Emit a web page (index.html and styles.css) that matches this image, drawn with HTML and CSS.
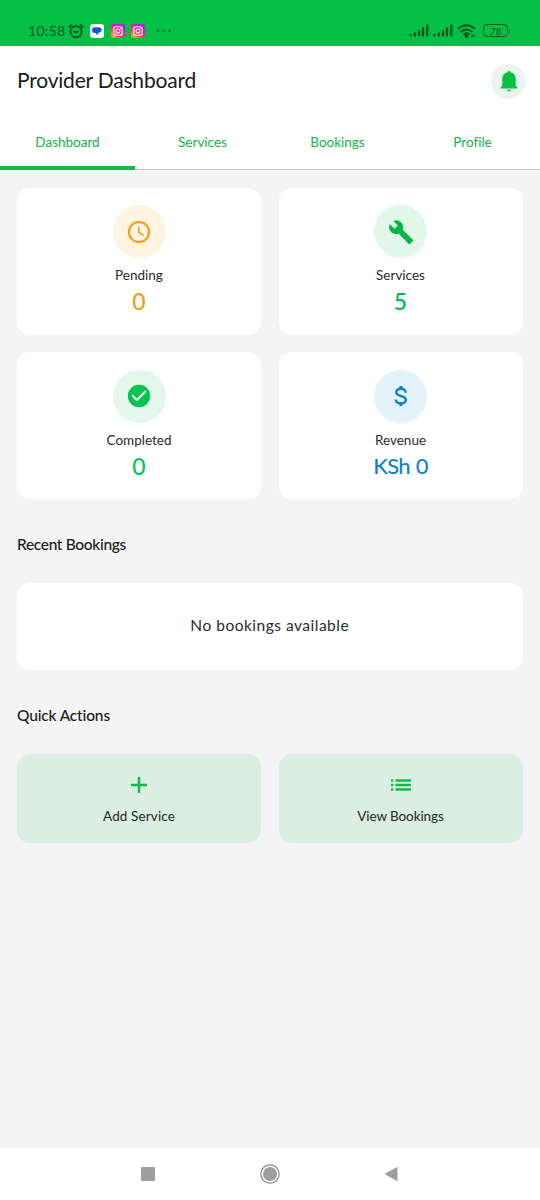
FILE: index.html
```html
<!DOCTYPE html>
<html lang="en">
<head>
<meta charset="utf-8">
<title>Provider Dashboard</title>
<link rel="stylesheet" href="styles.css">
</head>
<body>
<div class="status">
  <div class="status-left">
    <span class="time">10:58</span>
    <svg class="alarm" width="16" height="16" viewBox="0 0 16 16" fill="none" stroke="#05551b" stroke-width="1.8"><circle cx="8" cy="8.7" r="5.6"/><path d="M.8 4.3 4 1.3M15.2 4.3 12 1.3M5.7 8l2.3 1.5L10.5 8"/></svg>
    <svg class="app" width="14" height="14" viewBox="0 0 14 14"><rect width="14" height="14" rx="3" fill="#fff"/><path d="M5 3.200h4.200a2.700 2.700 0 0 1 .6 5.300L8.500 9 7 11.400 6 9H4.800A2.900 2.900 0 0 1 5 3.200Z" fill="#1457d2"/></svg>
    <svg class="app" width="14" height="14" viewBox="0 0 14 14"><defs><linearGradient id="ig" x1="0" y1="1" x2=".7" y2="0"><stop offset="0" stop-color="#ffc63b"/><stop offset=".35" stop-color="#ff4c48"/><stop offset=".7" stop-color="#e317ae"/><stop offset="1" stop-color="#a921e6"/></linearGradient></defs><rect width="14" height="14" rx="3" fill="url(#ig)"/><rect x="2.700" y="2.700" width="8.600" height="8.600" rx="2.300" fill="none" stroke="#fff" stroke-width="1.100"/><circle cx="7" cy="7" r="2" fill="none" stroke="#fff" stroke-width="1.100"/><circle cx="9.500" cy="4.500" r=".6" fill="#fff"/></svg>
    <svg class="app" width="14" height="14" viewBox="0 0 14 14"><rect width="14" height="14" rx="3" fill="url(#ig)"/><rect x="2.700" y="2.700" width="8.600" height="8.600" rx="2.300" fill="none" stroke="#fff" stroke-width="1.100"/><circle cx="7" cy="7" r="2" fill="none" stroke="#fff" stroke-width="1.100"/><circle cx="9.500" cy="4.500" r=".6" fill="#fff"/></svg>
    <svg class="more" width="16" height="4" viewBox="0 0 16 4" fill="#05551b"><circle cx="2" cy="2" r="1.100"/><circle cx="7.700" cy="2" r="1.100"/><circle cx="13.400" cy="2" r="1.100"/></svg>
  </div>
  <div class="status-right">
    <svg width="20" height="13" viewBox="0 0 20 13" stroke="#05551b" stroke-width="2.400" stroke-linecap="round"><path d="M1.500 11.200v.1M5.800 9.500v1.800M10 7.200v4.100M14 4.500v6.800M18.300 1.500v9.800"/></svg>
    <svg width="20" height="13" viewBox="0 0 20 13" stroke="#05551b" stroke-width="2.400" stroke-linecap="round"><path d="M1.500 11.200v.1M5.800 9.500v1.800M10 7.200v4.100M14 4.500v6.800M18.300 1.500v9.800"/></svg>
    <svg class="wifi" width="20" height="14" viewBox="0 0 20 14" fill="none" stroke="#05551b" stroke-width="2"><path d="M.9 5Q9.500-2.500 18.200 5M3.700 8Q9.500 3 15.400 8M6.600 10.500q2.900-2.300 5.800 0"/><circle cx="9.500" cy="12.200" r=".8"/><path d="M14 12.400h3.500M16 10.900h2" stroke-width="1.200"/></svg>
    <div class="battery"><span>78</span></div>
  </div>
</div>
<header class="header">
  <h1 class="title">Provider Dashboard</h1>
  <div class="bell"><svg width="20" height="22" viewBox="0 0 20 22" fill="#05bf43"><path d="M8.500 2.300a1.500 1.500 0 0 1 3 0C15.400 3.200 16.700 6 16.700 9v7l2 1.600v1H1.300v-1l2-1.600V9c0-3 1.300-5.800 5.200-6.700ZM8 19.700h4q-.3 1.800-2 1.800t-2-1.800Z"/></svg></div>
</header>
<nav class="tabs">
  <div class="tab active"><span>Dashboard</span></div>
  <div class="tab"><span>Services</span></div>
  <div class="tab"><span>Bookings</span></div>
  <div class="tab"><span>Profile</span></div>
</nav>
<main class="content">
  <section class="stats">
    <div class="card pending">
      <div class="disc"><svg width="26" height="26" viewBox="0 0 24 24" fill="none" stroke="currentColor"><circle cx="12" cy="12" r="9.300" stroke-width="1.900"/><path d="M11.800 7v5.300l4.400 2.700" stroke-width="1.400"/></svg></div>
      <div class="label">Pending</div><div class="value">0</div>
    </div>
    <div class="card services">
      <div class="disc"><svg width="26" height="26" viewBox="0 0 24 24" fill="currentColor"><path d="m22.700 19-9.100-9.100c.9-2.300.4-5-1.500-6.900-2-2-5-2.400-7.400-1.300L9 6 6 9 1.600 4.700C.4 7.100.9 10.100 2.900 12.100c1.900 1.900 4.600 2.400 6.900 1.500l9.900 9.900 3.800-3.700z"/></svg></div>
      <div class="label">Services</div><div class="value">5</div>
    </div>
    <div class="card completed">
      <div class="disc"><svg width="26" height="26" viewBox="0 0 24 24" fill="currentColor"><path d="M12 1.700a10.300 10.300 0 1 0 0 20.600 10.300 10.300 0 0 0 0-20.600zM10 17l-5-5 1.400-1.400 3.600 3.600 7.600-7.600L19 8l-9 9z"/></svg></div>
      <div class="label">Completed</div><div class="value">0</div>
    </div>
    <div class="card revenue">
      <div class="disc"><svg width="26" height="26" viewBox="0 0 24 24" fill="none" stroke="currentColor" stroke-width="2.200"><path d="M16.300 8.900C16.300 6.800 14.800 5.300 12 5.300 9.400 5.300 7.600 6.600 7.600 8.500c0 4.500 8.900 2.500 8.900 7 0 2-1.900 3.200-4.500 3.200-2.800 0-4.700-1.300-4.700-3.500"/><path d="M12 2.800V5M12 19v2.300" stroke-width="2.800"/></svg></div>
      <div class="label">Revenue</div><div class="value money">KSh 0</div>
    </div>
  </section>
  <h2 class="heading recent">Recent Bookings</h2>
  <div class="empty"><span>No bookings available</span></div>
  <h2 class="heading quick">Quick Actions</h2>
  <section class="actions">
    <div class="action"><svg width="20" height="20" viewBox="0 0 20 20" stroke="#12ba4c" stroke-width="2.400"><path d="M10 2v16M2 10h16"/></svg><span>Add Service</span></div>
    <div class="action"><svg width="22" height="20" viewBox="0 0 22 20" stroke="#12ba4c" stroke-width="2.400"><path d="M1 5.500h2.200M1 10h2.200M1 14.500h2.200M5.500 5.500H21M5.500 10H21M5.500 14.500H21"/></svg><span class="view">View Bookings</span></div>
  </section>
</main>
<footer class="navbar">
  <svg width="14" height="14" viewBox="0 0 14 14"><rect width="14" height="14" rx="1" fill="#9e9e9e"/></svg>
  <svg width="20" height="20" viewBox="0 0 20 20"><circle cx="10" cy="10" r="9.200" fill="none" stroke="#8c8c8c" stroke-width="1.200"/><circle cx="10" cy="10" r="7" fill="#9e9e9e"/></svg>
  <svg width="14" height="16" viewBox="0 0 14 16"><path d="M13.500.8v14.400L.5 8Z" fill="#9e9e9e"/></svg>
</footer>
</body>
</html>
```
FILE: styles.css
```css
* { box-sizing: border-box; }
body { margin: 0; width: 540px; height: 1200px; display: flex; flex-direction: column; overflow: hidden; background: #f4f4f4; color: #1a1a1a; font-family: Lato, "Liberation Sans", sans-serif; font-weight: 400; font-variant-ligatures: none; }
svg { display: block; flex: none; }
h1, h2 { margin: 0; font-weight: 400; }
span, .label, .value, h1, h2 { white-space: nowrap; }

.status { height: 46px; flex: none; background: #03bf45; display: flex; justify-content: space-between; padding: 21px 32px 0 28px; color: #05551b; }
.status-left, .status-right { display: flex; height: 19px; align-items: center; }
.time { width: 40px; font-size: 14px; letter-spacing: .3px; }
.app { margin-left: 6.500px; }
.alarm + .app { margin-left: 6px; }
.more { margin-left: 11px; }
.status-right { gap: 4px; }
.battery { position: relative; width: 25px; height: 13px; margin-left: 2px; border: 1.500px solid #05551b; border-radius: 4px; display: flex; align-items: center; justify-content: center; font-size: 10px; font-style: italic; line-height: 10px; }
.battery::after { content: ""; position: absolute; right: -3px; top: 3.500px; width: 1.500px; height: 4px; background: #05551b; }

.header { height: 70px; flex: none; background: #fff; display: flex; align-items: center; justify-content: space-between; padding: 0 14px 0 17px; }
.title { font-size: 21px; line-height: 30px; letter-spacing: -.2px; padding-bottom: 2px; }
.bell { width: 35px; height: 35px; border-radius: 50%; background: #ebf5ef; display: flex; align-items: center; justify-content: center; }

.tabs { height: 54px; flex: none; background: #fff; border-bottom: 1px solid #c4c4c4; display: grid; grid-template-columns: repeat(4, 1fr); color: #12b34b; font-size: 13.500px; }
.tab { position: relative; display: flex; align-items: center; justify-content: center; padding-bottom: 2px; }
.active::after { content: ""; position: absolute; left: 0; right: 0; bottom: -1px; height: 4px; background: #0cbb48; }

.content { flex: 1; padding: 17.500px 17.500px 0 17px; }
.stats { display: grid; grid-template-columns: 1fr 1fr; gap: 17.500px; }
.card { height: 147px; border-radius: 13px; background: #fff; display: flex; flex-direction: column; align-items: center; padding-top: 17.500px; }
.disc { width: 53px; height: 53px; border-radius: 50%; display: flex; align-items: center; justify-content: center; }
.pending { color: #f39c12; } .pending .disc { background: #fff3e2; }
.services { color: #05b846; } .services .disc { background: #e3f7e9; }
.completed { color: #06c451; } .completed .disc { background: #e3f8ea; }
.revenue { color: #0f83c9; } .revenue .disc { background: #e3f2fb; }
.label { margin-top: 8px; font-size: 13.500px; line-height: 18px; color: #2a2a2a; }
.value { font-size: 23px; line-height: 28px; margin-top: 3px; font-weight: 500; }
.money { font-size: 22px; letter-spacing: -.7px; word-spacing: 1px; }

.heading { font-size: 15.500px; line-height: 20px; font-weight: 500; width: max-content; letter-spacing: -.33px; }
.recent { margin-top: 34.500px; }
.empty { height: 87px; margin-top: 29.500px; border-radius: 13px; background: #fff; display: flex; align-items: center; justify-content: center; font-size: 15.500px; letter-spacing: .5px; padding-bottom: 3px; color: #2a2a2a; }
.quick { margin-top: 34.500px; letter-spacing: -.15px; }
.actions { margin-top: 29.500px; display: grid; grid-template-columns: 1fr 1fr; gap: 17.500px; }
.action { height: 89px; border-radius: 13px; background: #dceee2; display: flex; flex-direction: column; align-items: center; padding-top: 20.500px; font-size: 13.500px; color: #1a2a20; }
.action span { margin-top: 12px; line-height: 18px; letter-spacing: .12px; }
.action .view { letter-spacing: -.1px; }

.navbar { height: 52px; flex: none; background: #fff; display: flex; align-items: center; justify-content: space-between; padding: 0 142px 0 141px; }
```
